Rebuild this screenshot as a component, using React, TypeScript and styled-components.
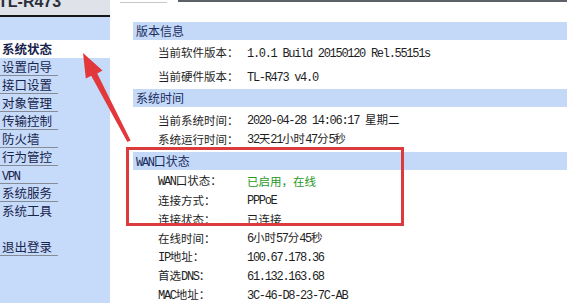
import React from "react";
import styled, { createGlobalStyle } from "styled-components";

const Global = createGlobalStyle`
  html, body { margin: 0; padding: 0; background: #ffffff; overflow: hidden; }
  body { font-family: "Noto Sans CJK SC", "Noto Sans", sans-serif; }
`;

const Page = styled.div`
  position: relative;
  display: grid;
  grid-template-columns: 110px 1fr;
  width: 567px;
  height: 303px;
  overflow: hidden;
`;

const Sidebar = styled.aside`
  background: #c6daf9;
  display: flex;
  flex-direction: column;
`;

const Brand = styled.div`
  height: 15px;
  background: #dfe3e9;
  border-bottom: 2px solid #161616;
  overflow: hidden;
  display: flex;
  align-items: flex-end;
`;

const BrandText = styled.span`
  font-family: "Liberation Sans", Arial, sans-serif;
  font-weight: bold;
  font-size: 16px;
  line-height: 16px;
  color: #2a2f3a;
  margin: 0 0 5px -2px;
`;

const Menu = styled.nav`
  display: flex;
  flex-direction: column;
  padding-top: 23px;
`;

const MenuItem = styled.div<{ $active?: boolean; $spaced?: boolean }>`
  height: 18px;
  margin-top: ${(p) => (p.$spaced ? "18px" : "0")};
  background: ${(p) => (p.$active ? "#ffffff" : "transparent")};
`;

const MenuLabel = styled.span<{ $active?: boolean; $plain?: boolean }>`
  display: block;
  box-sizing: border-box;
  width: 58px;
  height: 18px;
  padding-left: 2px;
  line-height: 17px;
  font-size: 12.5px;
  font-weight: ${(p) => (p.$active ? "bold" : "normal")};
  color: #17244c;
  white-space: nowrap;
  border-bottom: 1px solid ${(p) => (p.$plain ? "transparent" : "#858b97")};
`;

const Main = styled.main`
  display: flex;
  flex-direction: column;
`;

const TopRule = styled.div`
  display: flex;
  align-items: flex-start;
  height: 22px;
`;

const LightRule = styled.span`
  width: 47px;
  height: 1px;
  margin: 2px 0 0 10px;
  background: #c6c8cc;
`;

const DarkRule = styled.span`
  flex: 1;
  height: 2px;
  margin-left: 11px;
  background: #5d6168;
`;

const Content = styled.div`
  display: flex;
  flex-direction: column;
  padding-left: 23px;
`;

const Section = styled.section<{ $top: number; $pad: number }>`
  margin-top: ${(p) => p.$top}px;
  display: flex;
  flex-direction: column;
  & > div:nth-child(2) {
    margin-top: ${(p) => p.$pad}px;
  }
`;

const Header = styled.div`
  height: 18px;
  line-height: 18px;
  background: #c4d8f7;
  padding-left: 3px;
  font-size: 12px;
  color: #1a2d5e;
  white-space: nowrap;
`;

const Row = styled.div<{ $h: number }>`
  height: ${(p) => p.$h}px;
  display: flex;
  align-items: center;
  padding-left: 25px;
  font-size: 11.5px;
  color: #1e1e1e;
  white-space: nowrap;
`;

const Label = styled.span`
  width: 89px;
  flex: none;
`;

const Value = styled.span<{ $green?: boolean }>`
  color: ${(p) => (p.$green ? "#1f9a24" : "#1e1e1e")};
`;

const Latin = styled.span`
  font-family: "Liberation Mono", "Courier New", monospace;
  font-size: 12px;
  letter-spacing: -1.3px;
`;

const RedBox = styled.div`
  position: absolute;
  left: 126px;
  top: 147px;
  width: 278px;
  height: 79px;
  box-sizing: border-box;
  border: 3px solid #dc3b3e;
  pointer-events: none;
`;

const ArrowLayer = styled.svg`
  position: absolute;
  left: 0;
  top: 0;
  pointer-events: none;
`;

function Mixed({ text }: { text: string }) {
  const parts = text.split(/([\x00-\x7F]+)/).filter((s) => s.length > 0);
  return (
    <>
      {parts.map((s, i) =>
        /^[\x00-\x7F]+$/.test(s) ? <Latin key={i}>{s}</Latin> : <React.Fragment key={i}>{s}</React.Fragment>
      )}
    </>
  );
}

const menu: { t: string; active?: boolean; plain?: boolean; spaced?: boolean }[] = [
  { t: "系统状态", active: true, plain: true },
  { t: "设置向导" },
  { t: "接口设置" },
  { t: "对象管理" },
  { t: "传输控制" },
  { t: "防火墙" },
  { t: "行为管控" },
  { t: "VPN" },
  { t: "系统服务" },
  { t: "系统工具", plain: true },
  { t: "退出登录", spaced: true },
];

type Item = { l: string; v: string; green?: boolean };
const sections: { title: string; h: number; top: number; pad: number; rows: Item[] }[] = [
  {
    title: "版本信息",
    h: 24,
    top: 0,
    pad: 0,
    rows: [
      { l: "当前软件版本：", v: "1.0.1 Build 20150120 Rel.55151s" },
      { l: "当前硬件版本：", v: "TL-R473 v4.0" },
    ],
  },
  {
    title: "系统时间",
    h: 19,
    top: 1,
    pad: 3,
    rows: [
      { l: "当前系统时间：", v: "2020-04-28 14:06:17 星期二" },
      { l: "系统运行时间：", v: "32天21小时47分5秒" },
    ],
  },
  {
    title: "WAN口状态",
    h: 19,
    top: 4,
    pad: 1,
    rows: [
      { l: "WAN口状态：", v: "已启用，在线", green: true },
      { l: "连接方式：", v: "PPPoE" },
      { l: "连接状态：", v: "已连接" },
      { l: "在线时间：", v: "6小时57分45秒" },
      { l: "IP地址：", v: "100.67.178.36" },
      { l: "首选DNS：", v: "61.132.163.68" },
      { l: "MAC地址：", v: "3C-46-D8-23-7C-AB" },
    ],
  },
];

export default function App() {
  return (
    <>
      <Global />
      <Page>
        <Sidebar>
          <Brand>
            <BrandText>TL-R473</BrandText>
          </Brand>
          <Menu>
            {menu.map((m) => (
              <MenuItem key={m.t} $active={m.active} $spaced={m.spaced}>
                <MenuLabel $active={m.active} $plain={m.plain}>
                  <Mixed text={m.t} />
                </MenuLabel>
              </MenuItem>
            ))}
          </Menu>
        </Sidebar>
        <Main>
          <TopRule>
            <LightRule />
            <DarkRule />
          </TopRule>
          <Content>
            {sections.map((s) => (
              <Section key={s.title} $top={s.top} $pad={s.pad}>
                <Header>
                  <Mixed text={s.title} />
                </Header>
                {s.rows.map((r) => (
                  <Row key={r.l} $h={s.h}>
                    <Label>
                      <Mixed text={r.l} />
                    </Label>
                    <Value $green={r.green}>
                      <Mixed text={r.v} />
                    </Value>
                  </Row>
                ))}
              </Section>
            ))}
          </Content>
        </Main>
        <RedBox />
        <ArrowLayer width="567" height="303" viewBox="0 0 567 303">
          <path
            d="M83 53 L102.5 70.4 L97.2 73.4 L130.6 140.4 L127.4 141.9 L91.2 75.8 L85.8 78.6 Z"
            fill="#e2383c"
          />
        </ArrowLayer>
      </Page>
    </>
  );
}
